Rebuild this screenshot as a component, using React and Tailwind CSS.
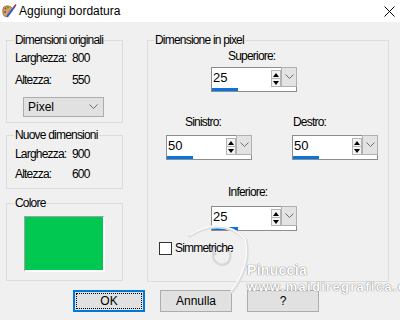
import React from "react";

const F = "font-['Liberation_Sans',Arial,sans-serif]";

function Chevron({ className = "" }) {
  return (
    <svg width="9" height="6" viewBox="0 0 9 6" className={className}>
      <path d="M0.5 0.5 L4.5 4.5 L8.5 0.5" fill="none" stroke="#6b6b6b" strokeWidth="1" />
    </svg>
  );
}

function Spin({ value }) {
  return (
    <div className="w-[86px] h-[25px] border border-[#8c8c8c] bg-white flex flex-col">
      <div className="flex h-[19px]">
        <div className="flex-1 pl-px text-[13px] leading-[19px] tracking-normal text-black">{value}</div>
        <div className="w-[10px] h-[17px] mt-[2px] border border-[#b5b5b5] bg-[#f3f3f3] flex flex-col">
          <div className="flex-1 flex items-center justify-center border-b border-[#b5b5b5]">
            <svg width="6" height="4" viewBox="0 0 6 4"><path d="M3 0 L6 4 L0 4 Z" fill="#000" /></svg>
          </div>
          <div className="flex-1 flex items-center justify-center">
            <svg width="6" height="4" viewBox="0 0 6 4"><path d="M0 0 L6 0 L3 4 Z" fill="#000" /></svg>
          </div>
        </div>
        <div className="w-[16px] h-[20px] -mt-px -mr-px bg-[#e3e3e3] border border-[#b0b0b0] flex items-center justify-center">
          <Chevron />
        </div>
      </div>
      <div className="h-[4px] w-[26px] bg-[#0a74da] mt-px" />
    </div>
  );
}

function Legend({ children, ml = "ml-[7px]" }) {
  return <legend className={`${ml} px-px leading-[14px]`}>{children}</legend>;
}

function Button({ children, focused }) {
  return (
    <div
      className={`w-[72px] h-[22px] bg-[#e1e1e1] flex items-stretch ${
        focused ? "border-2 border-[#0078d7] p-px" : "border border-[#adadad] p-[2px]"
      }`}
    >
      <div
        className={`flex-1 flex items-center justify-center text-[12px] leading-none tracking-normal ${
          focused ? "border border-dotted border-black" : ""
        }`}
      >
        {children}
      </div>
    </div>
  );
}

export default function App() {
  return (
    <div className={`${F} relative w-[400px] h-[320px] overflow-hidden bg-[#f0f0f0] text-black text-[12px] tracking-[-0.8px]`}>
      {/* Title bar */}
      <div className="h-[22px] bg-white flex items-center tracking-normal">
        <svg width="16" height="16" viewBox="0 0 16 16" className="ml-px mt-[1px]">
          <path d="M2 5 C2 2 7 1 10 3 C12 4 11 7 9 7 C7 7 8 10 6 12 C4 14 1 11 2 5 Z" fill="#d9a25a" stroke="#8a5a2b" strokeWidth="0.8" />
          <circle cx="4.5" cy="4.5" r="1" fill="#e22" />
          <circle cx="7" cy="3.5" r="1" fill="#2a2" />
          <circle cx="4" cy="8" r="1" fill="#26d" />
          <path d="M6 13 L14 2" stroke="#2a5fd0" strokeWidth="2" />
          <path d="M13 3 L15 0.5" stroke="#c33" strokeWidth="1.5" />
        </svg>
        <span className="ml-[2px] text-[12px] leading-none">Aggiungi bordatura</span>
        <svg width="11" height="11" viewBox="0 0 11 11" className="ml-auto mr-[5px]">
          <path d="M0.5 0.5 L10.5 10.5 M10.5 0.5 L0.5 10.5" stroke="#000" strokeWidth="1" />
        </svg>
      </div>

      {/* Body */}
      <div className="flex pl-[6px] pt-[11px]">
        {/* Left column */}
        <div className="w-[117px] flex flex-col">
          <fieldset className="border border-[#dcdcdc] pb-[5px]">
            <Legend>Dimensioni originali</Legend>
            <div className="pl-[8px] pt-[4px] flex flex-col gap-[8px]">
              <div className="flex h-[14px] leading-[14px]">
                <span className="w-[57px]">Larghezza:</span>
                <span>800</span>
              </div>
              <div className="flex h-[14px] leading-[14px]">
                <span className="w-[57px]">Altezza:</span>
                <span>550</span>
              </div>
            </div>
            <div className="ml-[16px] mt-[10px] w-[81px] h-[20px] bg-[#e1e1e1] border border-[#adadad] flex items-center pl-[4px] pr-[5px] tracking-normal">
              <span className="flex-1 text-[12px]">Pixel</span>
              <Chevron />
            </div>
          </fieldset>

          <fieldset className="border border-[#dcdcdc] pb-[7px] mt-[5px]">
            <Legend>Nuove dimensioni</Legend>
            <div className="pl-[8px] pt-[5px] flex flex-col gap-[6px]">
              <div className="flex h-[14px] leading-[14px]">
                <span className="w-[57px]">Larghezza:</span>
                <span>900</span>
              </div>
              <div className="flex h-[14px] leading-[14px]">
                <span className="w-[57px]">Altezza:</span>
                <span>600</span>
              </div>
            </div>
          </fieldset>

          <fieldset className="border border-[#dcdcdc] pb-[8px] mt-[7px]">
            <Legend>Colore</Legend>
            <div className="ml-[17px] mt-[6px] w-[81px] h-[56px] bg-[#00c850] border-t border-l border-[#a0a0a0] border-r-2 border-b-2 border-r-white border-b-white" />
          </fieldset>
        </div>

        {/* Right group */}
        <fieldset className="ml-[24px] w-[242px] h-[249px] border border-[#dcdcdc]">
          <Legend ml="ml-[6px]">Dimensione in pixel</Legend>
          <div className="flex flex-col pt-[2px]">
            <div className="ml-[80px] leading-[14px]">Superiore:</div>
            <div className="ml-[63px] mt-[4px]"><Spin value="25" /></div>

            <div className="flex mt-[23px] ml-[18px] gap-[40px]">
              <div className="flex flex-col">
                <div className="ml-[19px] leading-[14px]">Sinistro:</div>
                <div className="mt-[6px]"><Spin value="50" /></div>
              </div>
              <div className="flex flex-col">
                <div className="ml-[1px] leading-[14px]">Destro:</div>
                <div className="mt-[6px]"><Spin value="50" /></div>
              </div>
            </div>

            <div className="ml-[80px] mt-[25px] leading-[14px]">Inferiore:</div>
            <div className="ml-[63px] mt-[7px]"><Spin value="25" /></div>

            <div className="ml-[11px] mt-[10px] flex items-center gap-[3px]">
              <div className="w-[13px] h-[13px] border border-[#333] bg-white" />
              <span className="leading-[14px]">Simmetriche</span>
            </div>
          </div>
        </fieldset>
      </div>

      {/* Buttons */}
      <div className="absolute left-0 right-0 top-[290px] flex gap-[15px] pl-[73px]">
        <Button focused>OK</Button>
        <Button>Annulla</Button>
        <Button>?</Button>
      </div>

      {/* Watermark */}
      <svg className="absolute left-0 top-0 pointer-events-none" width="400" height="320" viewBox="0 0 400 320">
        <g fill="none" strokeLinecap="round">
          <path d="M190 236 Q222 216 246 240 Q252 266 232 292" stroke="#dedede" strokeWidth="3" />
          <path d="M190 235 Q222 215 245 239 Q251 265 231 291" stroke="#ffffff" strokeWidth="1.2" />
          <path d="M214 250 Q210 262 222 265 Q232 264 230 252" stroke="#d8d8d8" strokeWidth="2.5" />
          <circle cx="215" cy="254" r="1.6" fill="#d0d0d0" />
        </g>
      </svg>
      <div className="absolute left-[247px] top-[263px] font-bold text-[14px] leading-[14px] tracking-[0.3px] text-white [text-shadow:0_0_1px_#7a7a7a,0_0_1px_#7a7a7a] pointer-events-none">
        Pinuccia
      </div>
      <div className="absolute left-[247px] top-[280px] font-bold text-[13px] leading-[14px] tracking-[1.3px] whitespace-nowrap text-white [text-shadow:0_0_1px_#7a7a7a,0_0_1px_#7a7a7a] pointer-events-none">
        www.maidiregrafica.eu
      </div>
    </div>
  );
}
